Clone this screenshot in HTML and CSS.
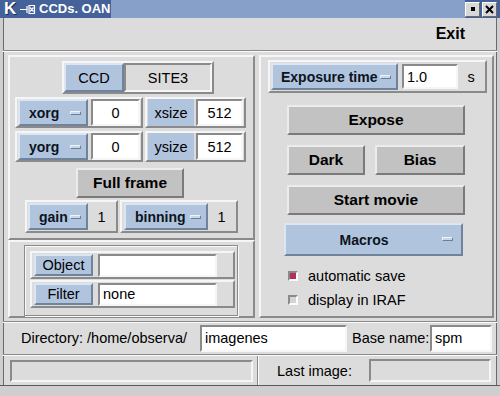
FILE: index.html
```html
<!DOCTYPE html>
<html lang="en">
  <head>
    <meta charset="utf-8" />
    <title>CCDs. OAN</title>
    <link rel="stylesheet" href="styles.css">
  </head>
  <body>
    <div class="win">
      <div class="titlebar">
        <span class="klogo">K</span>
        <svg class="pin" width="16" height="12" viewBox="0 0 16 12">
          <path d="M0 6.5H7M7 3V10M9 2.5H14.5V10.5H9ZM10 4.5L13.5 8.5M13.5 4.5L10 8.5" stroke="#fff" fill="none" stroke-width="1.2"/>
        </svg>
        <span class="title">CCDs. OAN</span>
        <span class="dots"></span>
        <span class="tbtn"><i class="sq"></i></span>
        <span class="tbtn">
          <svg width="9" height="9" viewBox="0 0 9 9"><path d="M1 1L8 8M8 1L1 8" stroke="#000" stroke-width="2"/></svg>
        </span>
      </div>
      <div class="client">
        <div class="menubar"><span class="exit">Exit</span></div>
        <div class="sep"></div>
        <div class="main">
          <div class="left">
            <div class="ccdbox">
              <div class="pair">
                <span class="blue ccd">CCD</span>
                <span class="site">SITE3</span>
              </div>
              <div class="row r-org">
                <div class="frame f-org">
                  <span class="mbtn w70">xorg<i class="ind"></i></span>
                  <span class="entry e49 center">0</span>
                </div>
                <div class="frame f-size">
                  <span class="lbl">xsize</span>
                  <span class="entry e47 center">512</span>
                </div>
              </div>
              <div class="row r-org2">
                <div class="frame f-org">
                  <span class="mbtn w70">yorg<i class="ind"></i></span>
                  <span class="entry e49 center">0</span>
                </div>
                <div class="frame f-size">
                  <span class="lbl">ysize</span>
                  <span class="entry e47 center">512</span>
                </div>
              </div>
              <span class="btn full">Full frame</span>
              <div class="row r-gain">
                <div class="frame f-gain">
                  <span class="mbtn w60">gain<i class="ind"></i></span>
                  <span class="val">1</span>
                </div>
                <div class="frame f-bin">
                  <span class="mbtn w84">binning<i class="ind"></i></span>
                  <span class="val">1</span>
                </div>
              </div>
            </div>
            <div class="objwrap">
              <div class="objframe">
                <div class="objrow">
                  <span class="blue obtn">Object</span>
                  <span class="entry e119"></span>
                </div>
                <div class="objrow">
                  <span class="blue obtn">Filter</span>
                  <span class="entry e119">none</span>
                </div>
              </div>
            </div>
          </div>
          <div class="right">
            <div class="frame f-exp">
              <span class="mbtn w127">Exposure time<i class="ind"></i></span>
              <span class="entry e56">1.0</span>
              <span class="val">s</span>
            </div>
            <span class="btn wide expose">Expose</span>
            <div class="darkbias">
              <span class="btn dark">Dark</span>
              <span class="btn bias">Bias</span>
            </div>
            <span class="btn wide movie">Start movie</span>
            <span class="mbtn macros"><span class="mtext">Macros</span><i class="ind"></i></span>
            <div class="check c1"><i class="box on"></i>automatic save</div>
            <div class="check c2"><i class="box"></i>display in IRAF</div>
          </div>
        </div>
        <div class="dirrow">
          <span class="dirlabel">Directory: /home/observa/</span>
          <span class="entry e147">imagenes</span>
          <span class="baselabel">Base name:</span>
          <span class="entry e62">spm</span>
        </div>
        <div class="status">
          <span class="sbox left-box"></span>
          <span class="vsep"></span>
          <span class="lastlabel">Last image:</span>
          <span class="sbox last-box"></span>
        </div>
      </div>
      <div class="bottom"></div>
    </div>
  </body>
</html>
```

FILE: styles.css
```css
* {
  box-sizing: border-box;
}
body {
  margin: 0;
  font-family: "Liberation Sans", Arial, sans-serif;
  font-size: 14.5px;
  color: #000;
  background: #dcdcdc;
}
i {
  font-style: normal;
}

.win {
  width: 500px;
  height: 396px;
  display: flex;
  flex-direction: column;
  overflow: hidden;
}

/* window title bar */
.titlebar {
  height: 18px;
  flex: none;
  display: flex;
  align-items: center;
  background: #44619a;
  color: #fff;
}
.klogo {
  flex: none;
  font-weight: bold;
  font-size: 17px;
  line-height: 18px;
  width: 18px;
  padding-left: 4px;
  text-shadow: 1px 1px #1c2c4c;
}
.pin {
  flex: none;
  margin-left: 2px;
}
.title {
  flex: none;
  width: 72px;
  margin-left: 3px;
  font-weight: bold;
  font-size: 13px;
  line-height: 18px;
  white-space: nowrap;
}
.dots {
  flex: 1;
  align-self: stretch;
  background-color: #3d5889;
  background-image: radial-gradient(circle, #8aa3cc 0.7px, transparent 0.9px);
  background-size: 2px 2px;
}
.tbtn {
  flex: none;
  width: 15px;
  height: 15px;
  margin-right: 2px;
  display: flex;
  align-items: center;
  justify-content: center;
  background: #d8d8d8;
  border: 1px solid;
  border-color: #fff #6a6a6a #6a6a6a #fff;
}
.tbtn:last-child {
  margin-right: 3px;
}
.sq {
  width: 4px;
  height: 4px;
  background: #000;
}

/* client area */
.client {
  flex: 1;
  display: flex;
  flex-direction: column;
  border-left: 3px solid #cfcfcf;
  border-right: 3px solid #cfcfcf;
  box-shadow: inset 1px 0 #6a6a6a, inset -1px 0 #6a6a6a;
}
.menubar {
  height: 32px;
  display: flex;
  align-items: center;
  justify-content: flex-end;
  padding-right: 32px;
}
.exit {
  font-weight: bold;
  font-size: 16px;
}
.sep {
  height: 2px;
  border-top: 1px solid #8a8a8a;
  border-bottom: 1px solid #fafafa;
}

.main {
  height: 266px;
  display: flex;
  gap: 4px;
  padding: 3px 3px 0 5px;
}

/* reliefs */
.ccdbox,
.objwrap,
.right,
.frame,
.pair,
.btn,
.mbtn,
.blue,
.objrow {
  border: 2px solid;
  border-color: #f6f6f6 #8a8a8a #8a8a8a #f6f6f6;
}
.entry,
.site,
.sbox {
  border: 2px solid;
  border-color: #8a8a8a #f6f6f6 #f6f6f6 #8a8a8a;
}

.blue,
.mbtn,
.lbl {
  background: #b0c4de;
}
.mbtn,
.blue {
  border-color: #dce6f3 #70839c #70839c #dce6f3;
}
.btn {
  display: flex;
  align-items: center;
  justify-content: center;
  background: #c2c2c2;
  font-weight: bold;
  font-size: 15.5px;
  border-color: #ececec #7a7a7a #7a7a7a #ececec;
}
.mbtn {
  display: flex;
  align-items: center;
  height: 27px;
  padding-left: 9px;
  font-weight: bold;
  font-size: 14px;
  color: #0c1420;
  position: relative;
}
.ind {
  position: absolute;
  right: 5px;
  top: 10px;
  width: 11px;
  height: 4px;
  background: #c8d6ea;
  border: 1px solid;
  border-color: #eef3fa #6c7f98 #6c7f98 #eef3fa;
}
.entry {
  display: flex;
  align-items: center;
  background: #fff;
  height: 27px;
  padding-left: 3px;
}
.entry.center {
  justify-content: center;
  padding-left: 0;
}
.val {
  flex: 1;
  text-align: center;
}

/* left column */
.left {
  width: 247px;
  display: flex;
  flex-direction: column;
}
.ccdbox {
  height: 185px;
  display: flex;
  flex-direction: column;
  align-items: flex-start;
}
.pair {
  display: flex;
  margin: 4px 0 0 52px;
}
.ccd {
  width: 60px;
  height: 29px;
  display: flex;
  align-items: center;
  justify-content: center;
}
.site {
  width: 88px;
  height: 29px;
  display: flex;
  align-items: center;
  justify-content: center;
}
.row {
  display: flex;
  gap: 2px;
  margin-left: 5px;
}
.r-org {
  margin-top: 3px;
}
.r-org2 {
  margin-top: 3px;
}
.frame {
  display: flex;
  align-items: center;
  height: 31px;
  padding: 0 1px;
}
.f-org {
  width: 128px;
  gap: 3px;
}
.f-size {
  width: 101px;
  gap: 2px;
}
.w70 {
  width: 70px;
}
.w60 {
  width: 60px;
}
.w84 {
  width: 84px;
}
.w127 {
  width: 127px;
  padding-left: 8px;
}
.e49 {
  width: 49px;
}
.e47 {
  width: 47px;
}
.lbl {
  width: 46px;
  height: 27px;
  display: flex;
  align-items: center;
  justify-content: center;
}
.full {
  width: 108px;
  height: 30px;
  margin: 6px 0 0 66px;
}
.r-gain {
  margin: 2px 0 0 15px;
}
.f-gain {
  width: 93px;
  height: 33px;
}
.f-bin {
  width: 118px;
  height: 33px;
  padding-left: 2px;
}

.objwrap {
  flex: 1;
  padding: 3px 0 0 14px;
}
.objframe {
  width: 214px;
  height: 71px;
  border: 1px solid #8a8a8a;
  box-shadow: inset 1px 1px #fafafa, 1px 1px #fafafa;
  padding: 5px 0 0 5px;
  display: flex;
  flex-direction: column;
  gap: 1px;
}
.objrow {
  width: 205px;
  height: 28px;
  display: flex;
  align-items: center;
  padding-left: 2px;
}
.obtn {
  width: 59px;
  height: 22px;
  display: flex;
  align-items: center;
  justify-content: center;
}
.e119 {
  width: 119px;
  height: 23px;
  margin-left: 5px;
}

/* right column */
.right {
  width: 235px;
  display: flex;
  flex-direction: column;
  align-items: flex-start;
}
.f-exp {
  width: 219px;
  height: 33px;
  margin: 3px 0 0 7px;
}
.e56 {
  width: 56px;
  height: 25px;
  margin-left: 4px;
}
.wide {
  width: 178px;
  height: 30px;
  margin-left: 26px;
}
.expose {
  margin-top: 12px;
}
.darkbias {
  display: flex;
  gap: 10px;
  margin: 10px 0 0 26px;
}
.dark {
  width: 78px;
  height: 30px;
}
.bias {
  width: 90px;
  height: 30px;
}
.movie {
  margin-top: 10px;
}
.macros {
  width: 179px;
  height: 33px;
  margin: 8px 0 0 23px;
  padding-left: 0;
}
.macros .mtext {
  width: 156px;
  text-align: center;
}
.macros .ind {
  top: 12px;
  right: 8px;
}
.check {
  display: flex;
  align-items: center;
  height: 14px;
  margin-left: 27px;
}
.c1 {
  margin-top: 13px;
}
.c2 {
  margin-top: 10px;
}
.box {
  width: 10px;
  height: 10px;
  margin-right: 10px;
  border: 2px solid;
  border-color: #8a8a8a #fafafa #fafafa #8a8a8a;
  background: #d4d4d4;
}
.box.on {
  background: #b03060;
}

/* directory and status rows */
.dirrow {
  height: 34px;
  margin-top: 3px;
  display: flex;
  align-items: center;
  padding-left: 18px;
  border-top: 1px solid #8a8a8a;
  border-bottom: 1px solid #8a8a8a;
  box-shadow: inset 0 1px #fafafa;
}
.dirlabel {
  width: 179px;
}
.e147 {
  width: 147px;
}
.baselabel {
  width: 83px;
  padding-left: 5px;
}
.e62 {
  width: 62px;
}
.status {
  height: 30px;
  display: flex;
  align-items: center;
  padding-left: 7px;
  border-top: 1px solid #fafafa;
}
.sbox {
  background: #dcdcdc;
  height: 22px;
}
.left-box {
  width: 243px;
}
.vsep {
  align-self: stretch;
  width: 2px;
  margin-left: 4px;
  border-left: 1px solid #8a8a8a;
  border-right: 1px solid #fafafa;
}
.lastlabel {
  width: 110px;
  padding-left: 18px;
}
.last-box {
  width: 122px;
  height: 23px;
}
.bottom {
  height: 11px;
  flex: none;
  background: #cfcfcf;
  border-top: 1px solid #5a5a5a;
}
```
